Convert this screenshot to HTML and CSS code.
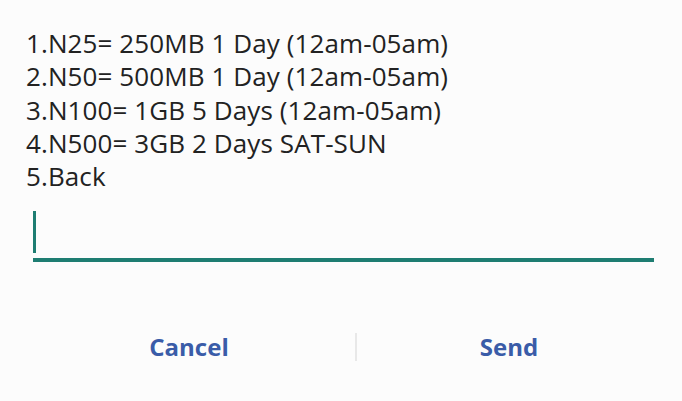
FILE: index.html
```html
<!DOCTYPE html>
<html lang="en">
<head>
    <meta charset="UTF-8">
    <meta name="viewport" content="width=device-width, initial-scale=1.0">
    <title>USSD</title>
    <link rel="stylesheet" href="styles.css">
</head>
<body>
    <div class="dialog">
        <div class="message">
            <div>1.N25= 250MB 1 Day (12am-05am)</div>
            <div>2.N50= 500MB 1 Day (12am-05am)</div>
            <div>3.N100= 1GB 5 Days (12am-05am)</div>
            <div>4.N500= 3GB 2 Days SAT-SUN</div>
            <div>5.Back</div>
        </div>
        <div class="field">
            <span class="cursor"></span>
        </div>
        <div class="actions">
            <button class="action">Cancel</button>
            <span class="divider"></span>
            <button class="action">Send</button>
        </div>
    </div>
</body>
</html>
```

FILE: styles.css
```css
body {
    margin: 0;
    background-color: #fcfcfc;
    font-family: "Open Sans", Roboto, sans-serif;
}
.dialog {
    width: 682px;
    height: 401px;
    padding: 27px 0 0 26px;
    box-sizing: border-box;
}
.message {
    font-size: 26px;
    letter-spacing: 0.1px;
    line-height: 33.3px;
    color: #222;
}
.field {
    margin: 18px 0 0 7px;
    width: 621px;
    height: 47px;
    border-bottom: 4px solid #1e7d72;
    display: flex;
    align-items: flex-start;
}
.cursor {
    width: 3px;
    height: 42px;
    background-color: #1e7d72;
}
.actions {
    display: grid;
    grid-template-columns: 332px 2px 304px;
    align-items: center;
    margin-top: 68px;
    margin-left: -3px;
}
.action {
    border: none;
    background: none;
    font-family: "Open Sans", Roboto, sans-serif;
    font-weight: bold;
    font-size: 24px;
    color: #3a5ca8;
    padding: 0;
    cursor: pointer;
}
.divider {
    height: 28px;
    background-color: #e8e8e8;
}
```
